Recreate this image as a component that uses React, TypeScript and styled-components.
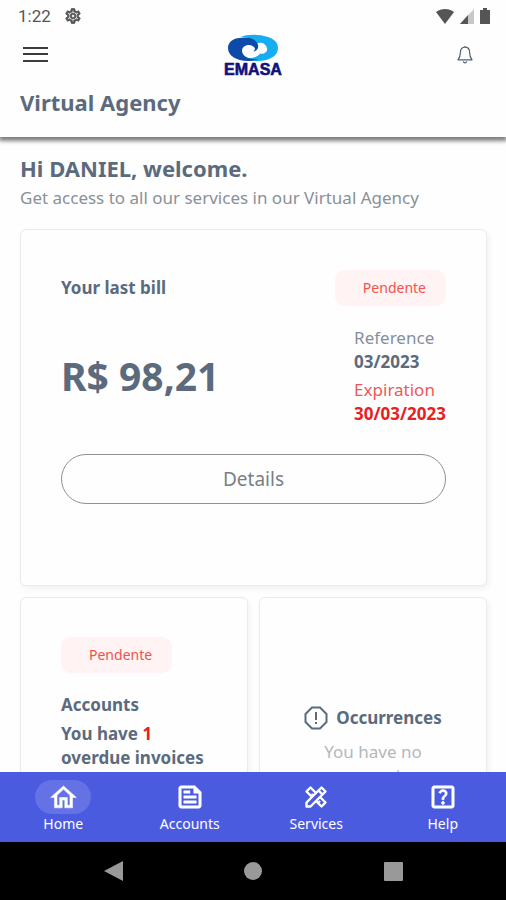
import React from "react";
import styled, { createGlobalStyle } from "styled-components";
import {
  MdOutlineSettings,
  MdOutlineHome,
  MdOutlineFeed,
  MdOutlineHelpCenter,
} from "react-icons/md";

const GlobalStyle = createGlobalStyle`
  *, *::before, *::after { box-sizing: border-box; }
  body {
    margin: 0;
    background: #fefefe;
    font-family: "Noto Sans", "Open Sans", sans-serif;
    color: #5b6b7d;
  }
  h1, h2, h3, p, dl, dd { margin: 0; }
  button { font: inherit; color: inherit; background: none; border: 0; padding: 0; cursor: pointer; }
`;

const Screen = styled.div`
  display: flex;
  flex-direction: column;
  height: 100vh;
`;

const Header = styled.header`
  position: relative;
  z-index: 1;
  background: #fefefe;
  box-shadow: 0 3px 4px 1px rgba(0, 0, 0, 0.5);
`;

const StatusBar = styled.div`
  display: flex;
  align-items: center;
  justify-content: space-between;
  height: 32px;
  padding: 0 16px 0 18px;
`;

const StatusGroup = styled.div<{ $gap: number }>`
  display: flex;
  align-items: center;
  gap: ${(p) => p.$gap}px;
  font: 400 17px/24px Roboto, sans-serif;
  color: #555;
`;

const SettingsIcon = styled(MdOutlineSettings)`
  path:last-child { stroke: currentColor; stroke-width: 1px; }
`;

const TopBar = styled.div`
  display: grid;
  grid-template-columns: 1fr auto 1fr;
  align-items: center;
  height: 46px;
  padding: 0 23px;
`;

const IconButton = styled.button<{ $end?: boolean }>`
  display: flex;
  justify-self: ${(p) => (p.$end ? "end" : "start")};
  margin-right: ${(p) => (p.$end ? "10px" : "0")};
  color: ${(p) => (p.$end ? "#4f5f70" : "#3c3c3c")};
`;

const PageTitle = styled.h1`
  padding: 9px 20px 20px;
  font-size: 22px;
  line-height: 30px;
  font-weight: 700;
`;

const Content = styled.main`
  flex: 1;
  min-height: 0;
  overflow: auto;
  scrollbar-width: none;
  padding: 16px 19px 20px 20px;
`;

const Greeting = styled.h2`
  font-size: 22px;
  line-height: 30px;
  font-weight: 700;
`;

const Intro = styled.p`
  margin-bottom: 16px;
  font-size: 17px;
  line-height: 30px;
  color: #8a9097;
`;

const Card = styled.section<{ $centered?: boolean }>`
  display: flex;
  flex-direction: column;
  align-items: ${(p) => (p.$centered ? "center" : "stretch")};
  justify-content: ${(p) => (p.$centered ? "center" : "flex-start")};
  text-align: ${(p) => (p.$centered ? "center" : "left")};
  padding: 40px;
  background: #fefefe;
  border: 1px solid #eaecec;
  border-radius: 6px;
  box-shadow: 2px 3px 6px rgba(0, 0, 0, 0.05);
`;

const BillCard = styled(Card)`
  padding-bottom: 81px;
`;

const SplitRow = styled.div`
  display: flex;
  align-items: center;
  justify-content: space-between;
`;

const CardTitle = styled.h3`
  font-size: 17px;
  line-height: 24px;
  font-weight: 700;
`;

const StatusPill = styled.span`
  align-self: flex-start;
  padding: 0 20px 0 28px;
  border-radius: 10px;
  background: #fff3f3;
  color: #f0524f;
  font-size: 14px;
  line-height: 36px;
`;

const BillBody = styled(SplitRow)`
  margin: 20px 0 28px;
`;

const Amount = styled.p`
  font-size: 39px;
  line-height: 52px;
  font-weight: 700;
`;

const Dates = styled.dl`
  font-size: 17px;
  line-height: 24px;
`;

const DateItem = styled.div<{ $alert?: boolean }>`
  color: ${(p) => (p.$alert ? "#e8201f" : "inherit")};
  & + & { margin-top: 4px; }
  dt { opacity: 0.75; }
  dd { font-weight: 700; }
`;

const DetailsButton = styled.button`
  height: 50px;
  border: 1px solid #8c9296;
  border-radius: 25px;
  font-size: 19px;
  color: #77808a;
`;

const CardGrid = styled.div`
  display: grid;
  grid-template-columns: 1fr 1fr;
  gap: 11px;
  margin-top: 11px;
`;

const SmallCard = styled(Card)`
  min-height: 300px;
  padding: 39px 24px 40px ${(p) => (p.$centered ? "24px" : "40px")};
`;

const AccountsTitle = styled(CardTitle)`
  margin: 20px 0 5px;
`;

const AccountsText = styled.p`
  font-size: 17px;
  line-height: 24px;
  font-weight: 700;
  strong { font-weight: 700; color: #e8201f; }
`;

const IconHeading = styled.div`
  display: flex;
  align-items: center;
  gap: 8px;
  margin-bottom: 10px;
`;

const MutedText = styled.p`
  font-size: 17px;
  line-height: 24px;
  color: #b4b8bb;
`;

const TabBar = styled.nav`
  display: grid;
  grid-template-columns: repeat(4, 1fr);
  padding: 8px 0;
  background: #4a5be0;
`;

const Tab = styled.a`
  display: flex;
  flex-direction: column;
  align-items: center;
  color: #fff;
  font-size: 14px;
  line-height: 20px;
  text-decoration: none;
`;

const TabIcon = styled.span<{ $active?: boolean }>`
  display: flex;
  align-items: center;
  justify-content: center;
  width: 56px;
  height: 34px;
  border-radius: 17px;
  background: ${(p) => (p.$active ? "#6572e5" : "transparent")};
`;

const outlined = (Icon: typeof MdOutlineHome) => styled(Icon)`
  path:last-child { stroke: currentColor; stroke-width: 0.4px; }
`;

const HomeIcon = outlined(MdOutlineHome);
const FeedIcon = outlined(MdOutlineFeed);
const HelpIcon = outlined(MdOutlineHelpCenter);

const SystemBar = styled.div`
  display: grid;
  grid-template-columns: repeat(3, 140px);
  justify-content: center;
  height: 58px;
  background: #000;
`;

const SystemButton = styled.button`
  display: flex;
  align-items: center;
  justify-content: center;
`;

const Logo = () => (
  <svg width="70" height="46" viewBox="0 0 70 46" role="img" aria-label="EMASA">
    <g transform="translate(10 3) scale(1 0.93)">
      <path d="M12 2C20-1 32-1 39 2 46 4 50 8 50 14 50 22 42 28 30 28 25 28 20 27 16 24 22 26 30 24 32 20 36 21 40 18 39 14 38 9 33 7 29 9 25 4 19 2 12 2Z" fill="#16aef0" />
      <path d="M14 3C5 3 0 8 0 14 0 22 8 28 20 28 24 28 28 27 30 26 22 27 14 23 14 17 14 12 20 9 25 12 28 14 27 17 25 18 31 17 32 10 27 6 24 3 19 2 14 3Z" fill="#0d4aa9" />
    </g>
    <text x="35" y="43" textAnchor="middle" fontFamily="Liberation Sans, Arial, sans-serif" fontWeight="700" fontSize="16" fill="#10107c" stroke="#10107c" strokeWidth="0.6">EMASA</text>
  </svg>
);

const MenuIcon = () => (
  <svg width="25" height="18" viewBox="0 0 25 18" fill="none" stroke="currentColor" strokeWidth="2">
    <path d="M0 2h25M0 8h25M0 15h25" />
  </svg>
);

const BellIcon = () => (
  <svg width="16" height="18" viewBox="0 0 16 18" fill="none" stroke="currentColor" strokeWidth="1.2" strokeLinejoin="round">
    <path d="M8 1.200C5 1.200 3.400 3.600 3.400 6.400c0 3.400-.6 5-2.400 7.400h14c-1.800-2.400-2.400-4-2.400-7.400C12.600 3.600 11 1.200 8 1.200ZM8 0v1.200M6.200 15.600c.8 1.600 2.800 1.600 3.600 0" />
  </svg>
);

const WifiIcon = () => (
  <svg width="18" height="15" viewBox="0 0 18 15"><path d="M0 3C5-1 13-1 18 3L9 15Z" fill="currentColor" /></svg>
);

const SignalIcon = () => (
  <svg width="14" height="15" viewBox="0 0 14 15">
    <path d="M14 0v15H0Z" fill="#c8c8c8" />
    <path d="M8 6v9H0Z" fill="currentColor" />
  </svg>
);

const BatteryIcon = () => (
  <svg width="10" height="16" viewBox="0 0 10 16"><path d="M3 0h4v2h3v14H0V2h3Z" fill="currentColor" /></svg>
);

const AlertIcon = () => (
  <svg width="24" height="24" viewBox="0 0 24 24" fill="none" stroke="currentColor" strokeWidth="2">
    <path d="M8 1.500h8L22.500 8v8L16 22.500H8L1.500 16V8ZM12 6v8M12 16v2" />
  </svg>
);

const ToolsIcon = ({ size }: { size: number }) => (
  <svg width={size} height={size} viewBox="0 0 24 24" fill="none" stroke="currentColor" strokeWidth="2.4" strokeLinejoin="round">
    <path d="m2.500 6.500 4-4 15 15-4 4ZM7 11l2-2M14 18l2-2" />
    <path d="M2.500 21.500v-4l15-15 4 4-15 15Z" fill="#4a5be0" />
    <path d="m14.500 5.500 4 4" />
  </svg>
);

const tabs = [
  { label: "Home", Icon: HomeIcon, size: 31, active: true },
  { label: "Accounts", Icon: FeedIcon, size: 30 },
  { label: "Services", Icon: ToolsIcon, size: 24 },
  { label: "Help", Icon: HelpIcon, size: 30 },
];

export default function App() {
  return (
    <Screen>
      <GlobalStyle />
      <Header>
        <StatusBar>
          <StatusGroup $gap={13}>
            <span>1:22</span>
            <SettingsIcon size={18} />
          </StatusGroup>
          <StatusGroup $gap={6}>
            <WifiIcon />
            <SignalIcon />
            <BatteryIcon />
          </StatusGroup>
        </StatusBar>
        <TopBar>
          <IconButton aria-label="Menu"><MenuIcon /></IconButton>
          <Logo />
          <IconButton $end aria-label="Notifications"><BellIcon /></IconButton>
        </TopBar>
        <PageTitle>Virtual Agency</PageTitle>
      </Header>

      <Content>
        <Greeting>Hi DANIEL, welcome.</Greeting>
        <Intro>Get access to all our services in our Virtual Agency</Intro>

        <BillCard>
          <SplitRow>
            <CardTitle>Your last bill</CardTitle>
            <StatusPill>Pendente</StatusPill>
          </SplitRow>
          <BillBody>
            <Amount>R$ 98,21</Amount>
            <Dates>
              <DateItem>
                <dt>Reference</dt>
                <dd>03/2023</dd>
              </DateItem>
              <DateItem $alert>
                <dt>Expiration</dt>
                <dd>30/03/2023</dd>
              </DateItem>
            </Dates>
          </BillBody>
          <DetailsButton>Details</DetailsButton>
        </BillCard>

        <CardGrid>
          <SmallCard>
            <StatusPill>Pendente</StatusPill>
            <AccountsTitle>Accounts</AccountsTitle>
            <AccountsText>You have <strong>1</strong> overdue invoices</AccountsText>
          </SmallCard>
          <SmallCard $centered>
            <IconHeading>
              <AlertIcon />
              <CardTitle>Occurrences</CardTitle>
            </IconHeading>
            <MutedText>You have no occurrences in your</MutedText>
          </SmallCard>
        </CardGrid>
      </Content>

      <TabBar aria-label="Main">
        {tabs.map(({ label, Icon, size, active }) => (
          <Tab key={label} href={"#" + label.toLowerCase()} aria-current={active ? "page" : undefined}>
            <TabIcon $active={active}><Icon size={size} /></TabIcon>
            {label}
          </Tab>
        ))}
      </TabBar>
      <SystemBar>
        <SystemButton aria-label="Back">
          <svg width="19" height="20" viewBox="0 0 19 20"><path d="M19 0v20L0 10Z" fill="#999" /></svg>
        </SystemButton>
        <SystemButton aria-label="Home screen">
          <svg width="18" height="18" viewBox="0 0 18 18"><circle cx="9" cy="9" r="9" fill="#999" /></svg>
        </SystemButton>
        <SystemButton aria-label="Recent apps">
          <svg width="19" height="19" viewBox="0 0 19 19"><rect width="19" height="19" rx="1" fill="#999" /></svg>
        </SystemButton>
      </SystemBar>
    </Screen>
  );
}
